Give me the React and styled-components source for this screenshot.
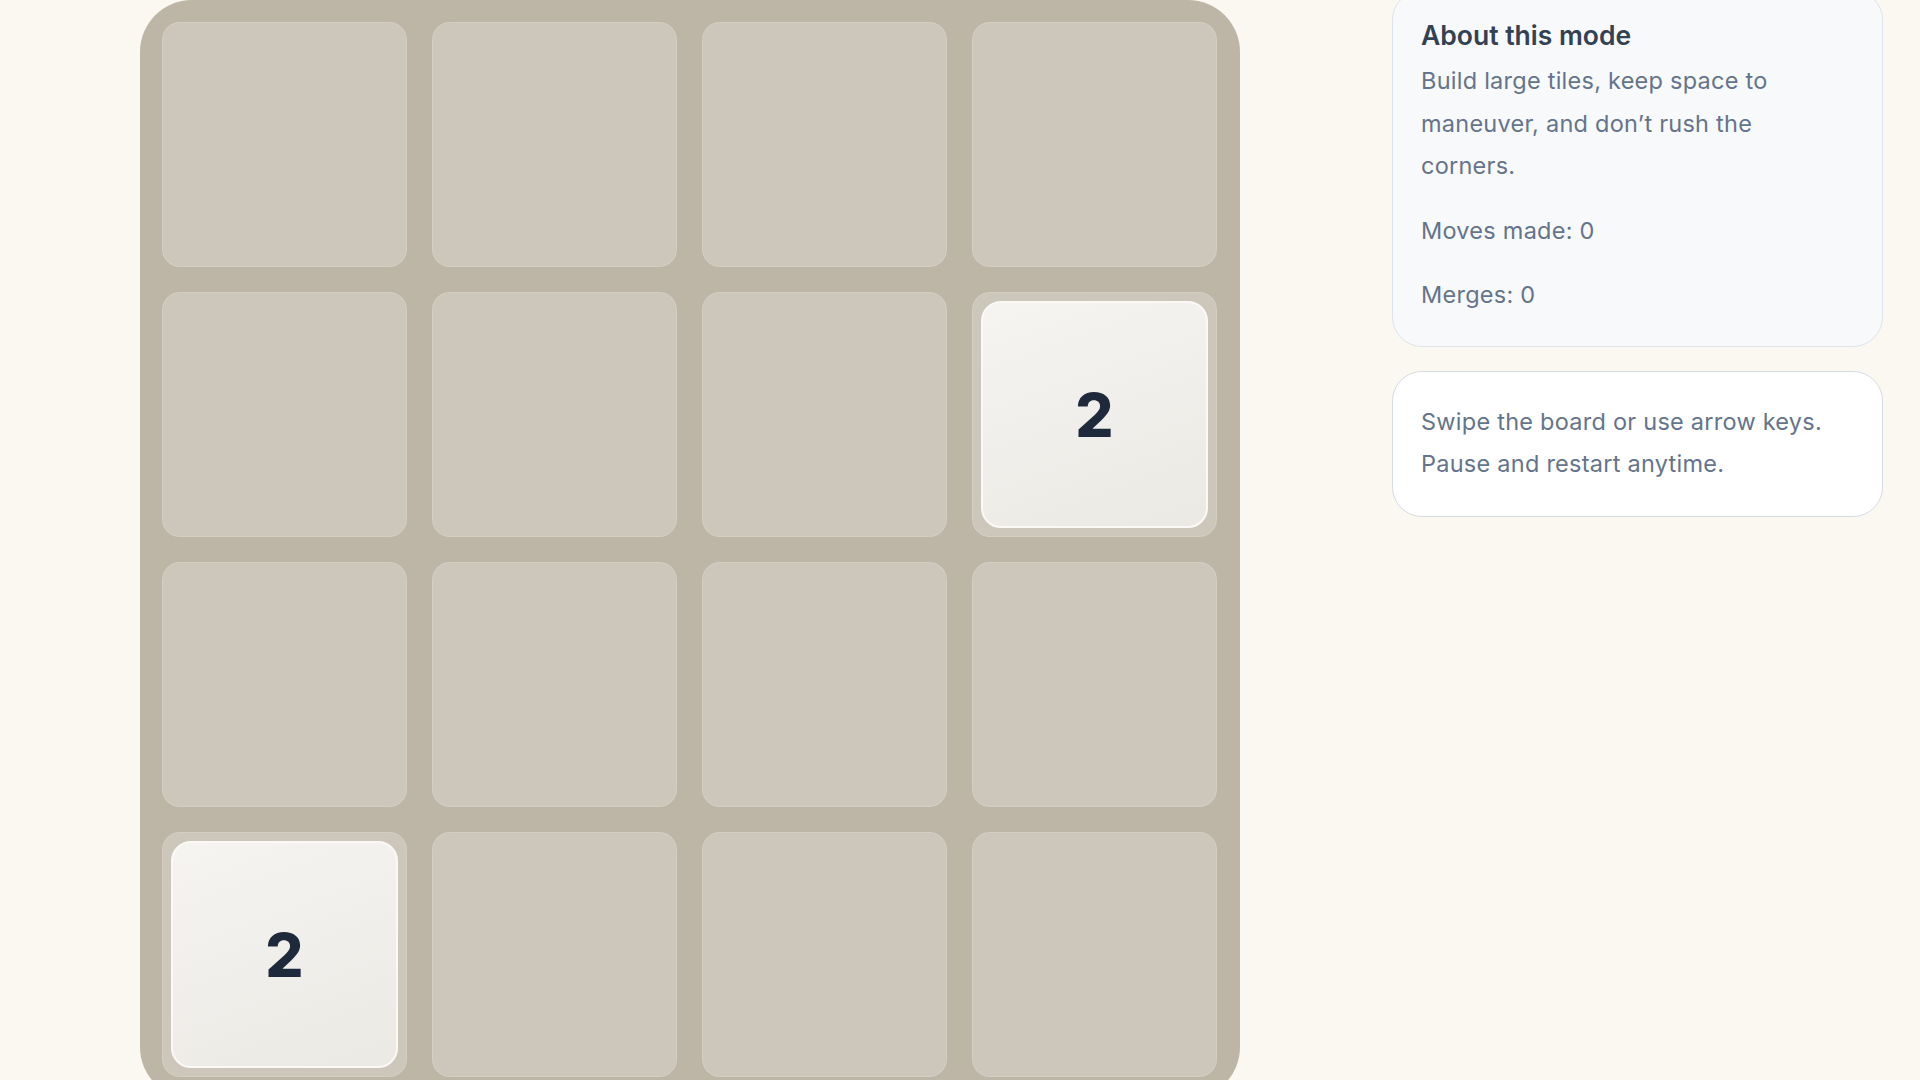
import React from 'react';
import styled, { createGlobalStyle } from 'styled-components';

const GlobalStyle = createGlobalStyle`
  html, body {
    margin: 0;
    padding: 0;
    background: #fbf7f1;
    overflow: hidden;
  }

  body {
    font-family: Inter, "Noto Sans", sans-serif;
  }
`;

const Page = styled.div`
  display: flex;
  align-items: flex-start;
  gap: 152px;
  padding-left: 140px;
  height: 1080px;
  overflow: hidden;
`;

const Board = styled.div`
  flex: 0 0 auto;
  width: 1100px;
  box-sizing: border-box;
  padding: 22px;
  background: #bdb6a7;
  border-radius: 52px;
  display: grid;
  grid-template-columns: repeat(4, 245px);
  grid-auto-rows: 245px;
  gap: 25px;
`;

const Cell = styled.div`
  display: flex;
  box-sizing: border-box;
  padding: 8px;
  border-radius: 18px;
  background: #cdc6ba;
  border: 1px solid rgba(255, 255, 255, 0.14);
`;

const Tile = styled.div`
  flex: 1;
  display: flex;
  align-items: center;
  justify-content: center;
  border-radius: 20px;
  background: linear-gradient(160deg, #f5f4f1 0%, #ebe9e4 100%);
  border: 2px solid #faf9f6;
  color: #1e293b;
  font-family: Inter, sans-serif;
  font-weight: 800;
  font-size: 60px;
`;

const Sidebar = styled.aside`
  flex: 0 0 491px;
  margin-top: -10px;
  display: flex;
  flex-direction: column;
  gap: 24px;
`;

const Card = styled.section`
  box-sizing: border-box;
  padding: ${p => (p.$muted ? '28px 34px 29px 28px' : '29px 34px 30px 28px')};
  border-radius: 30px;
  background: ${p => (p.$muted ? '#f8f9fb' : '#ffffff')};
  border: 1px solid ${p => (p.$muted ? '#dde3ea' : '#d5dbe4')};
  display: flex;
  flex-direction: column;
  gap: 22px;
`;

const Heading = styled.h3`
  margin: 0 0 -13px;
  font-size: 26.5px;
  line-height: 32px;
  font-weight: 600;
  color: #334155;
`;

const Text = styled.p`
  margin: 0;
  font-size: 23.5px;
  letter-spacing: 0.25px;
  line-height: 42.5px;
  color: #64748b;
`;

const tiles = { '1-3': 2, '3-0': 2 };

export default function App() {
  const cells = [];
  for (let r = 0; r < 4; r++) {
    for (let c = 0; c < 4; c++) {
      const v = tiles[`${r}-${c}`];
      cells.push(<Cell key={`${r}-${c}`}>{v && <Tile>{v}</Tile>}</Cell>);
    }
  }

  return (
    <>
      <GlobalStyle />
      <Page>
        <Board>{cells}</Board>
        <Sidebar>
          <Card $muted>
            <Heading>About this mode</Heading>
            <Text>
              Build large tiles, keep space to maneuver, and don’t rush the corners.
            </Text>
            <Text>Moves made: 0</Text>
            <Text>Merges: 0</Text>
          </Card>
          <Card>
            <Text>
              Swipe the board or use arrow keys.
              <br />
              Pause and restart anytime.
            </Text>
          </Card>
        </Sidebar>
      </Page>
    </>
  );
}
